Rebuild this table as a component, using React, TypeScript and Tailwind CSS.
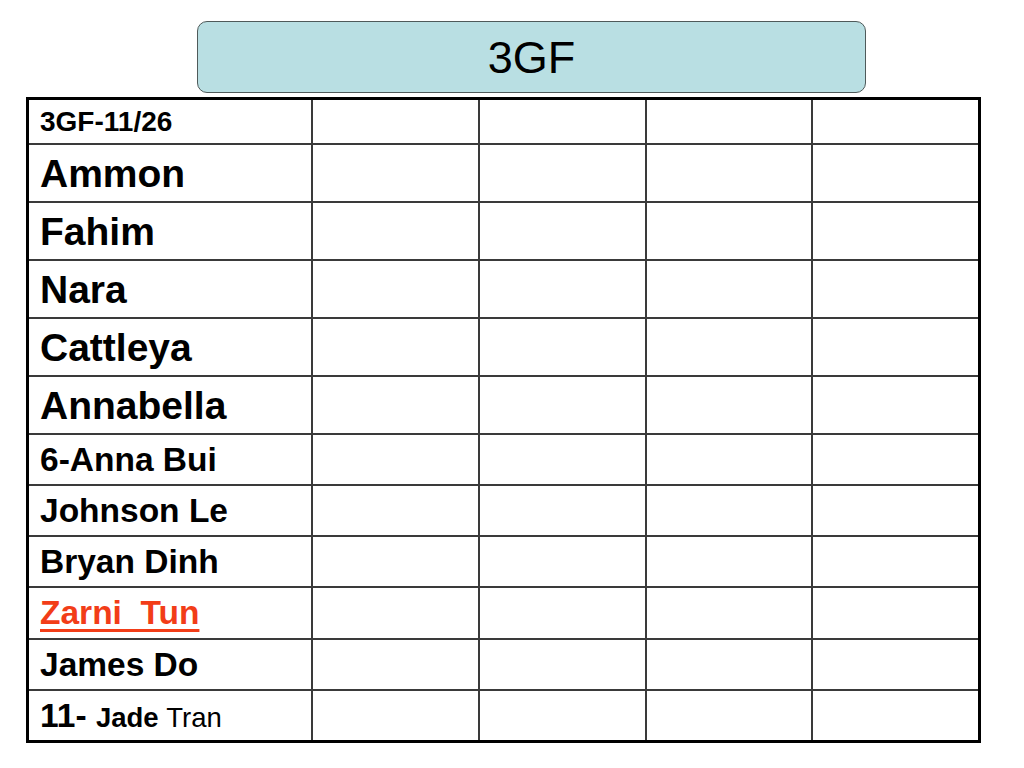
import React from "react";

type Row = { h: string; content: React.ReactNode };

const big = "text-[39px] font-bold";
const mid = "text-[33.5px] font-bold";

const rows: Row[] = [
  { h: "h-[43px]", content: <span className="text-[28px] font-bold">3GF-11/26</span> },
  { h: "h-[58px]", content: <span className={big}>Ammon</span> },
  { h: "h-[58px]", content: <span className={big}>Fahim</span> },
  { h: "h-[58px]", content: <span className={big}>Nara</span> },
  { h: "h-[58px]", content: <span className={big}>Cattleya</span> },
  { h: "h-[58px]", content: <span className={big}>Annabella</span> },
  { h: "h-[51px]", content: <span className={mid}>6-Anna Bui</span> },
  { h: "h-[51px]", content: <span className={mid}>Johnson Le</span> },
  { h: "h-[51px]", content: <span className={mid}>Bryan Dinh</span> },
  {
    h: "h-[52px]",
    content: (
      <span className={`${mid} text-[#f23d18] underline decoration-[3px] underline-offset-[5px] whitespace-pre`}>
        {"Zarni  Tun"}
      </span>
    ),
  },
  { h: "h-[51px]", content: <span className={mid}>James Do</span> },
  {
    h: "h-[51px]",
    content: (
      <span className="whitespace-pre">
        <span className="text-[33.5px] font-bold">11- </span>
        <span className="text-[27.5px] font-bold">Jade </span>
        <span className="text-[27.5px]">Tran</span>
      </span>
    ),
  },
];

export default function App() {
  return (
    <div
      className="w-[1024px] h-[768px] bg-white text-black overflow-hidden"
      style={{ fontFamily: '"Liberation Sans", Arial, sans-serif' }}
    >
      <div className="ml-[197px] mt-[21px] w-[669px] h-[72px] rounded-[10px] border-[1.5px] border-[#4f5a5a] bg-[#b9dfe3] flex items-center justify-center">
        <span className="text-[45px] leading-none">3GF</span>
      </div>
      <div className="ml-[26px] mt-[4px] w-[955px] border-[3px] border-black">
        {rows.map((r, i) => (
          <div
            key={i}
            className={`flex ${r.h} ${i > 0 ? "border-t-2 border-[#3a3a3a]" : ""}`}
          >
            <div className="w-[282px] pl-[11px] flex items-center leading-none">{r.content}</div>
            <div className="flex-1 border-l-2 border-[#3a3a3a]" />
            <div className="flex-1 border-l-2 border-[#3a3a3a]" />
            <div className="flex-1 border-l-2 border-[#3a3a3a]" />
            <div className="flex-1 border-l-2 border-[#3a3a3a]" />
          </div>
        ))}
      </div>
    </div>
  );
}
